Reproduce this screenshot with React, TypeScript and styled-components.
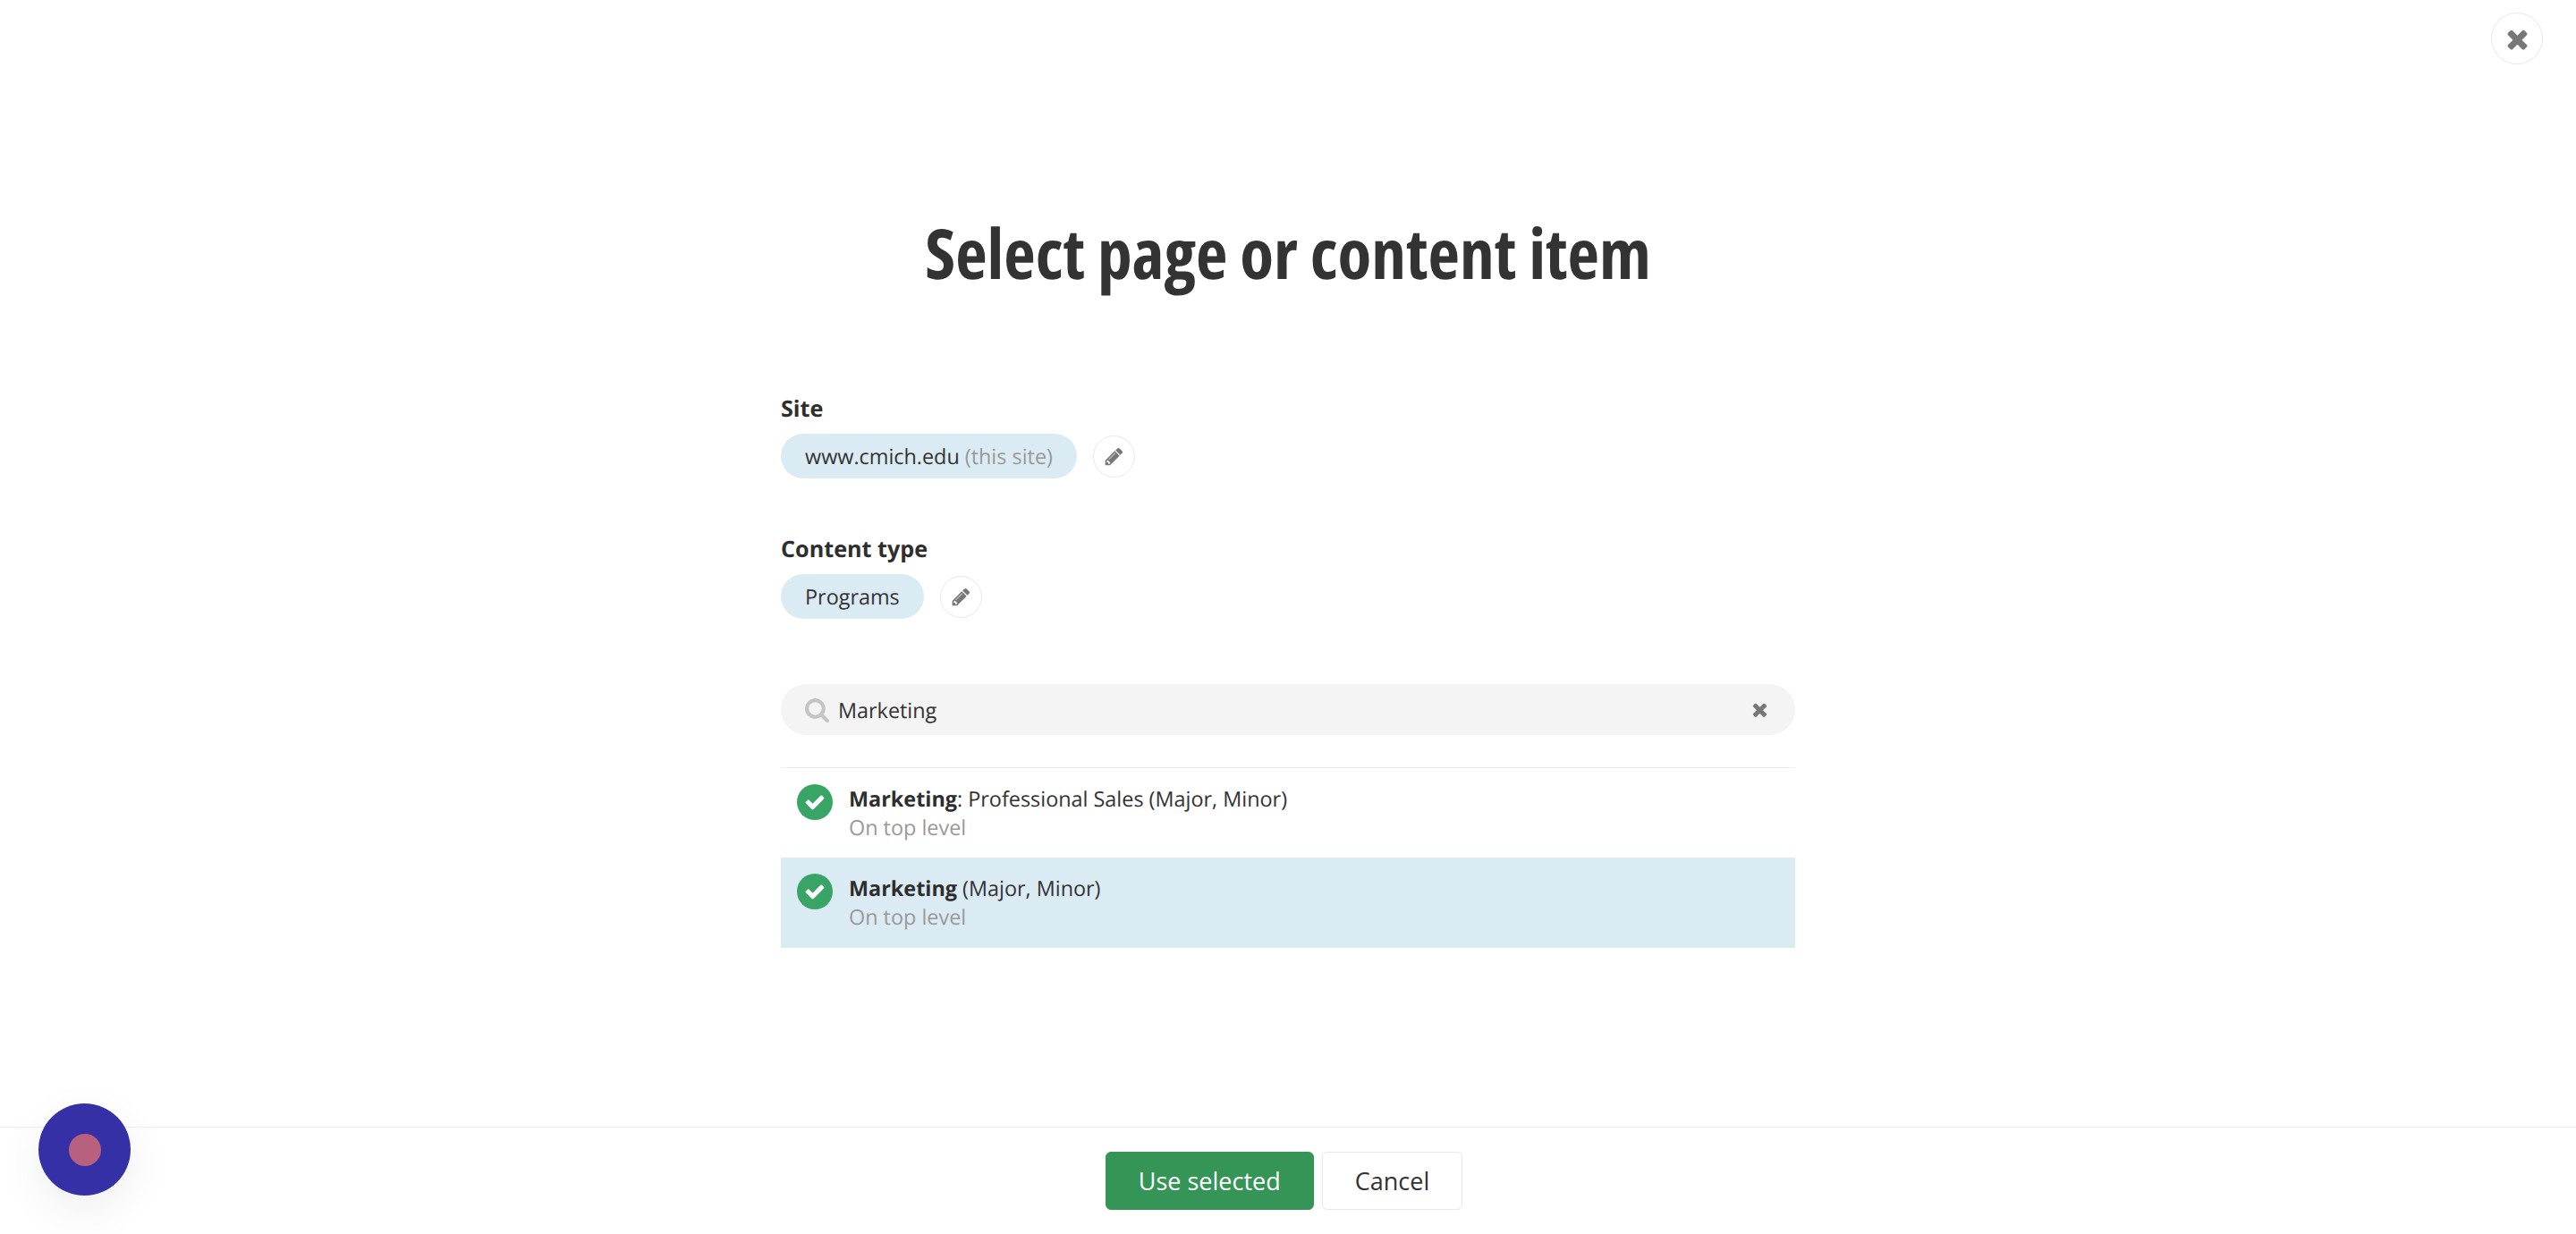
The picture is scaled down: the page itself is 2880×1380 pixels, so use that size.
import React from 'react'
import styled, { createGlobalStyle } from 'styled-components'

const GlobalStyle = createGlobalStyle`
  html, body {
    margin: 0;
    height: 100%;
    background: #fff;
  }
  body {
    font-family: "Open Sans", "Liberation Sans", sans-serif;
    font-size: 23.4px;
    color: #333;
    text-rendering: geometricPrecision;
  }
  #root {
    height: 100%;
  }
`

const Page = styled.div`
  position: relative;
  height: 1380px;
  display: flex;
  flex-direction: column;
  overflow: hidden;
`

const Main = styled.main`
  flex: 1;
  display: flex;
  flex-direction: column;
  align-items: center;
  padding-top: 237px;
`

const Title = styled.h1`
  margin: 0 0 111px;
  font-size: 77.4px;
  line-height: 90px;
  font-weight: 700;
  font-stretch: 75%;
  color: #333;
`

const Form = styled.div`
  width: 1134px;
`

const Field = styled.section`
  margin-bottom: 60px;

  &:last-of-type {
    margin-bottom: 74px;
  }
`

const Label = styled.div`
  font-size: 25.2px;
  line-height: 38px;
  font-weight: 700;
  color: #2e2e2e;
  margin-bottom: 9px;
`

const ValueRow = styled.div`
  display: flex;
  align-items: center;
  gap: 18px;
`

const Pill = styled.div`
  height: 50px;
  padding: 0 27px;
  display: flex;
  align-items: center;
  border-radius: 25px;
  background: #dbebf3;
  color: #333;
`

const Muted = styled.span`
  color: #999;
  margin-left: 6px;
`

const RoundButton = styled.button<{ $size: number }>`
  width: ${(p) => p.$size}px;
  height: ${(p) => p.$size}px;
  padding: 0;
  flex: none;
  display: flex;
  align-items: center;
  justify-content: center;
  border: 1px solid #e8e8e8;
  border-radius: 50%;
  background: #fff;
  color: #777;
`

const CloseButton = styled(RoundButton)`
  position: absolute;
  top: 14px;
  right: 37px;
`

const SearchBar = styled.div`
  height: 57px;
  margin-top: -1px;
  padding: 0 28px 0 26px;
  display: flex;
  align-items: center;
  gap: 9px;
  border-radius: 29px;
  background: #f4f4f4;
`

const SearchText = styled.span`
  flex: 1;
  color: #333;
`

const ClearIcon = styled.span`
  color: #777;
`

const ResultList = styled.ul`
  list-style: none;
  margin: 36px 0 0;
  padding: 0;
  border-top: 1px solid #eee;
`

const Result = styled.li<{ $selected?: boolean }>`
  height: 101px;
  padding: 18px 0 0 18px;
  box-sizing: border-box;
  display: flex;
  gap: 18px;
  background: ${(p) => (p.$selected ? '#dbebf3' : 'transparent')};

  &:first-child {
    height: 100px;
  }
`

const CheckBadge = styled.span`
  width: 40px;
  height: 40px;
  flex: none;
  display: flex;
  align-items: center;
  justify-content: center;
  border-radius: 50%;
  background: #38a566;
  color: #fff;
`

const ResultText = styled.div`
  line-height: 32px;
`

const ResultTitle = styled.div`
  color: #333;

  strong {
    font-weight: 700;
    color: #2e2e2e;
  }
`

const ResultPath = styled.div`
  color: #999;
`

const Footer = styled.footer`
  height: 120px;
  box-sizing: border-box;
  padding: 27px 9px 0 0;
  display: flex;
  justify-content: center;
  gap: 9px;
  border-top: 1px solid #eee;
`

const Button = styled.button<{ $primary?: boolean }>`
  height: 65px;
  padding: 0 36px;
  font-family: inherit;
  font-size: 27px;
  border-radius: 6px;
  border: 1px solid ${(p) => (p.$primary ? '#359557' : '#e8e8e8')};
  background: ${(p) => (p.$primary ? '#359557' : '#fff')};
  color: ${(p) => (p.$primary ? '#fff' : '#333')};
`

const ChatBubble = styled.div`
  position: absolute;
  left: 43px;
  top: 1234px;
  width: 103px;
  height: 103px;
  display: flex;
  align-items: center;
  justify-content: center;
  border-radius: 50%;
  background: #3530a6;
  box-shadow: 0 16px 50px rgba(0, 0, 0, 0.07);
`

const ChatDot = styled.span`
  width: 36px;
  height: 36px;
  border-radius: 50%;
  background: #b8617f;
`

const SvgIcon = styled.svg`
  display: block;
  fill: currentColor;
`

const SearchIconWrap = styled.span`
  color: #c4c4c4;
`

function Icon({ d, size }: { d: string; size: number }): JSX.Element {
  return (
    <SvgIcon viewBox="0 0 1792 1792" width={size} height={size}>
      <path d={d} />
    </SvgIcon>
  )
}

const TIMES =
  'M1490 1322q0 40-28 68l-136 136q-28 28-68 28t-68-28l-294-294-294 294q-28 28-68 28t-68-28l-136-136q-28-28-28-68t28-68l294-294-294-294q-28-28-28-68t28-68l136-136q28-28 68-28t68 28l294 294 294-294q28-28 68-28t68 28l136 136q28 28 28 68t-28 68l-294 294 294 294q28 28 28 68z'
const PENCIL =
  'M491 1536l91-91-235-235-91 91v107h128v128h107zm523-928q0-22-22-22-10 0-17 7l-542 542q-7 7-7 17 0 22 22 22 10 0 17-7l542-542q7-7 7-17zm-54-192l416 416-832 832h-416v-416zm683 96q0 53-37 90l-166 166-416-416 166-165q36-38 90-38 53 0 91 38l235 234q37 39 37 91z'
const SEARCH =
  'M1216 832q0-185-131.5-316.5t-316.5-131.5-316.5 131.5-131.5 316.5 131.5 316.5 316.5 131.5 316.5-131.5 131.5-316.5zm512 832q0 52-38 90t-90 38q-54 0-90-38l-343-342q-179 124-399 124-143 0-273.5-55.5t-225-150-150-225-55.5-273.5 55.5-273.5 150-225 225-150 273.5-55.5 273.5 55.5 225 150 150 225 55.5 273.5q0 220-124 399l343 343q37 37 37 90z'
const CHECK =
  'M1671 566q0 40-28 68l-724 724-136 136q-28 28-68 28t-68-28l-136-136-362-362q-28-28-28-68t28-68l136-136q28-28 68-28t68 28l294 295 656-657q28-28 68-28t68 28l136 136q28 28 28 68z'

function App(): JSX.Element {
  return (
    <Page>
      <GlobalStyle />
      <CloseButton $size={58}>
        <Icon d={TIMES} size={33} />
      </CloseButton>
      <Main>
        <Title>Select page or content item</Title>
        <Form>
          <Field>
            <Label>Site</Label>
            <ValueRow>
              <Pill>
                www.cmich.edu<Muted>(this site)</Muted>
              </Pill>
              <RoundButton $size={47}>
                <Icon d={PENCIL} size={23} />
              </RoundButton>
            </ValueRow>
          </Field>
          <Field>
            <Label>Content type</Label>
            <ValueRow>
              <Pill>Programs</Pill>
              <RoundButton $size={47}>
                <Icon d={PENCIL} size={23} />
              </RoundButton>
            </ValueRow>
          </Field>
          <SearchBar>
            <SearchIconWrap>
              <Icon d={SEARCH} size={29} />
            </SearchIconWrap>
            <SearchText>Marketing</SearchText>
            <ClearIcon>
              <Icon d={TIMES} size={23} />
            </ClearIcon>
          </SearchBar>
          <ResultList>
            <Result>
              <CheckBadge>
                <Icon d={CHECK} size={24} />
              </CheckBadge>
              <ResultText>
                <ResultTitle>
                  <strong>Marketing</strong>: Professional Sales (Major, Minor)
                </ResultTitle>
                <ResultPath>On top level</ResultPath>
              </ResultText>
            </Result>
            <Result $selected>
              <CheckBadge>
                <Icon d={CHECK} size={24} />
              </CheckBadge>
              <ResultText>
                <ResultTitle>
                  <strong>Marketing</strong> (Major, Minor)
                </ResultTitle>
                <ResultPath>On top level</ResultPath>
              </ResultText>
            </Result>
          </ResultList>
        </Form>
      </Main>
      <Footer>
        <Button $primary>Use selected</Button>
        <Button>Cancel</Button>
      </Footer>
      <ChatBubble>
        <ChatDot />
      </ChatBubble>
    </Page>
  )
}

export default App
